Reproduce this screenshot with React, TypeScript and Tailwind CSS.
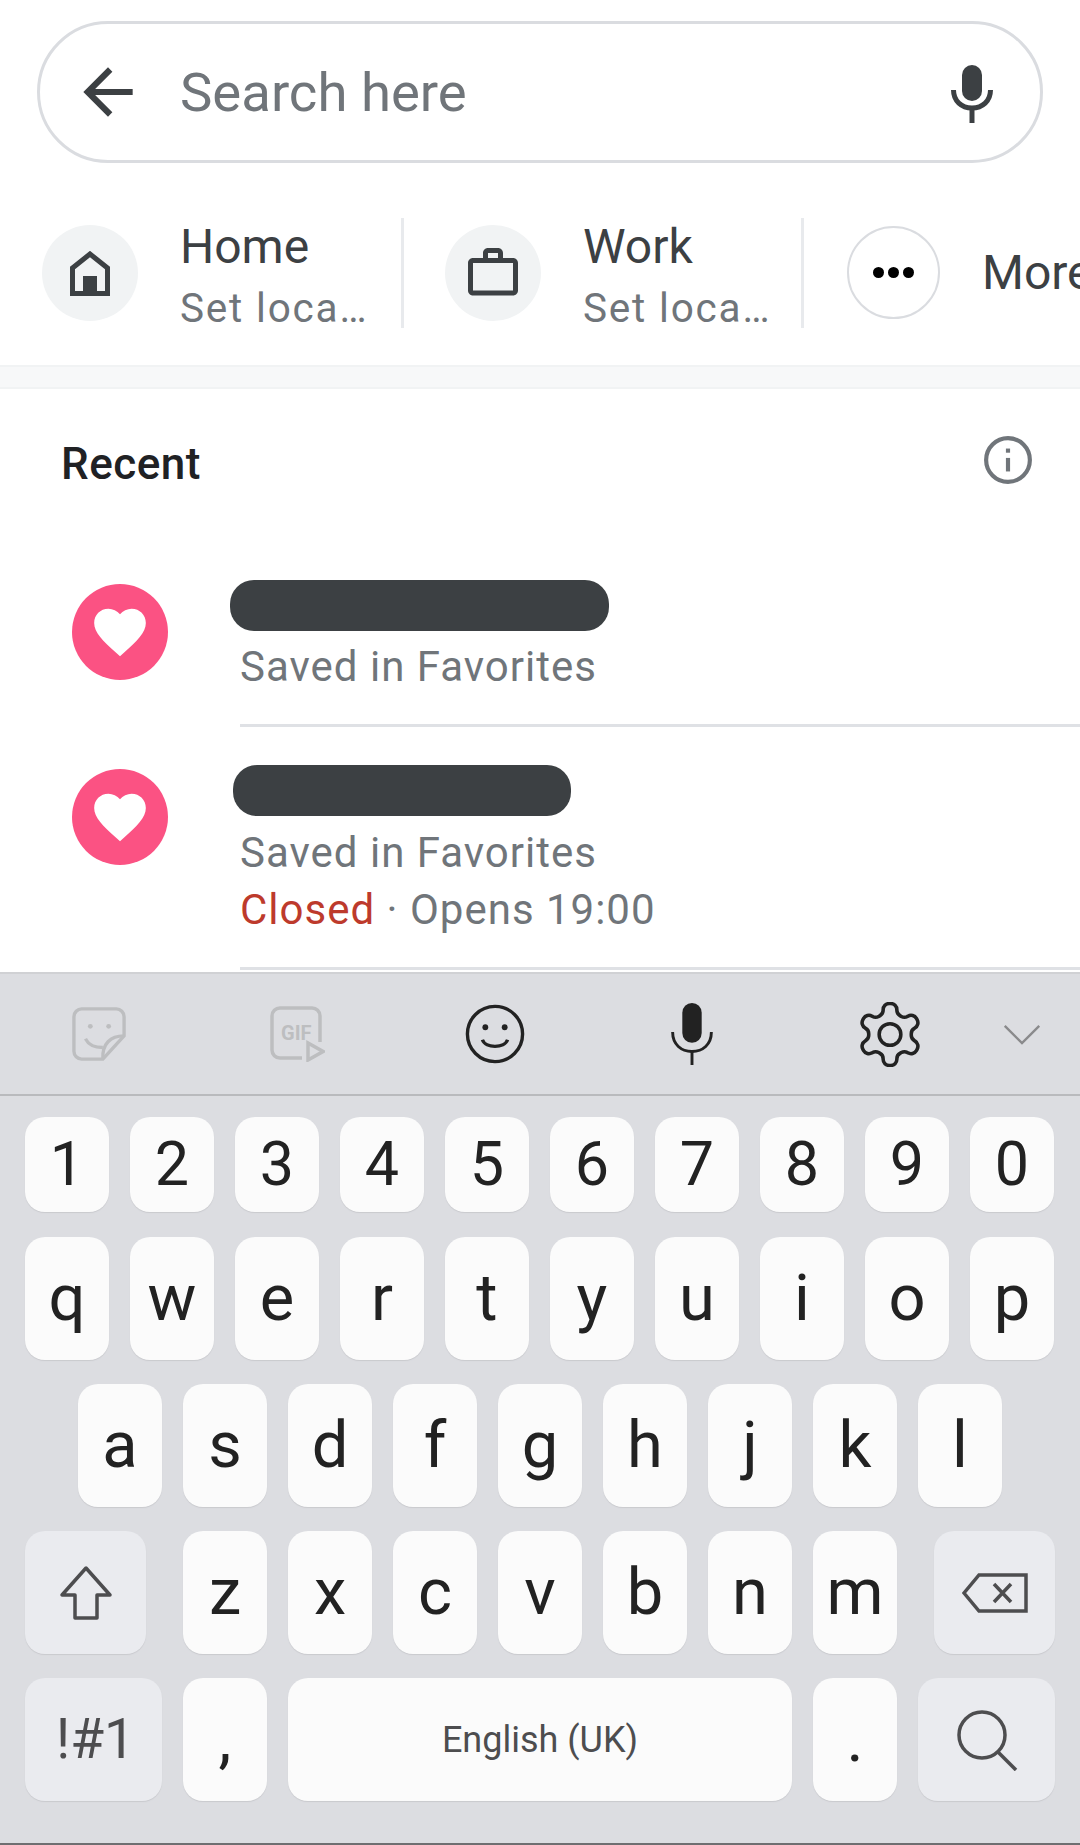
// Maps search screen with the on-screen keyboard open underneath it.

const NUMBERS = ["1", "2", "3", "4", "5", "6", "7", "8", "9", "0"];
const TOP_LETTERS = ["q", "w", "e", "r", "t", "y", "u", "i", "o", "p"];
const MID_LETTERS = ["a", "s", "d", "f", "g", "h", "j", "k", "l"];
const LOW_LETTERS = ["z", "x", "c", "v", "b", "n", "m"];

function Key({ label, small }: { label: string; small?: boolean }) {
  return (
    <div
      className={`w-[84px] h-full flex items-center justify-center bg-[#fbfbfb] rounded-[20px] shadow-[0_1px_1px_#c9cace] leading-none text-[#222222] ${
        small ? "text-[61px]" : "text-[65px]"
      }`}
    >
      {label}
    </div>
  );
}

function SideKey({ width, children }: { width: string; children: React.ReactNode }) {
  return (
    <div className={`${width} h-full flex items-center justify-center bg-[#eaebef] rounded-[20px] shadow-[0_1px_1px_#c9cace] text-[#4d4d4f]`}>
      {children}
    </div>
  );
}

function Heart() {
  return (
    <div className="w-[96px] h-[96px] rounded-full bg-[#fb5283] flex items-center justify-center shrink-0">
      <svg width="62" height="62" viewBox="0 0 24 24" fill="#ffffff">
        <path d="M12 21.400l-1.500-1.400C5.400 15.400 2 12.300 2 8.500 2 5.400 4.400 3 7.500 3c1.700 0 3.400.800 4.500 2.100C13.100 3.800 14.800 3 16.500 3 19.600 3 22 5.400 22 8.500c0 3.800-3.400 6.900-8.500 11.500L12 21.400z" />
      </svg>
    </div>
  );
}

function ShortcutText({ title, width }: { title: string; width: string }) {
  return (
    <div className={`flex flex-col shrink-0 mt-[5px] ${width}`}>
      <span className="text-[48px] leading-[54px] text-[#3c4043]">{title}</span>
      <span className="text-[40.5px] leading-[48px] mt-[10px] text-[#70757a] tracking-[1.8px] whitespace-nowrap">Set loca…</span>
    </div>
  );
}

export default function App() {
  return (
    <div className="w-[1080px] h-[1845px] overflow-hidden bg-white flex flex-col font-['Roboto',sans-serif]">
      {/* Search box */}
      <div className="pt-[21px] px-[37px]">
        <div className="h-[142px] rounded-full border-[3px] border-[#dadce0] flex items-center pl-[31px] pr-[47px]">
          <svg width="74" height="74" viewBox="0 0 24 24" fill="#3c4043" className="shrink-0">
            <path d="M20 11H7.830l5.590-5.590L12 4l-8 8 8 8 1.410-1.410L7.830 13H20v-2z" />
          </svg>
          <span className="ml-[35px] text-[54.5px] leading-none text-[#70757a] flex-1">Search here</span>
          <svg width="42" height="58" viewBox="0 0 42 58" fill="none" className="shrink-0 mt-[4px]">
            <rect x="11" y="0" width="20" height="36" rx="10" fill="#3c4043" />
            <path d="M2.500 25c0 11 8 18 18.500 18s18.500-7 18.500-18" stroke="#3c4043" strokeWidth="5" />
            <path d="M21 43v15" stroke="#3c4043" strokeWidth="5" />
          </svg>
        </div>
      </div>

      {/* Home / Work / More shortcuts */}
      <div className="mt-[51px] h-[118px] flex items-center pl-[42px] overflow-hidden shrink-0">
        <div className="w-[96px] h-[96px] rounded-full bg-[#f1f3f4] flex items-center justify-center shrink-0">
          <svg width="40" height="45" viewBox="0 0 40 45" fill="none">
            <path d="M2.500 42.500V17L20 3l17.500 14v25.500z" stroke="#3c4043" strokeWidth="5" />
            <path d="M13 25h14v20H13z" fill="#3c4043" />
          </svg>
        </div>
        <div className="ml-[42px] shrink-0">
          <ShortcutText title="Home" width="w-[221px]" />
        </div>
        <div className="w-[3px] h-[110px] bg-[#e8eaed] shrink-0" />
        <div className="w-[96px] h-[96px] rounded-full bg-[#f1f3f4] flex items-center justify-center shrink-0 ml-[41px]">
          <svg width="60" height="60" viewBox="0 0 24 24" fill="#3c4043">
            <path d="M14 6V4h-4v2h4zM4 8v11h16V8H4zm16-2c1.110 0 2 .890 2 2v11c0 1.110-.890 2-2 2H4c-1.110 0-2-.890-2-2l.010-11c0-1.110.880-2 1.990-2h4V4c0-1.110.890-2 2-2h4c1.110 0 2 .890 2 2v2h4z" />
          </svg>
        </div>
        <div className="ml-[42px] shrink-0">
          <ShortcutText title="Work" width="w-[218px]" />
        </div>
        <div className="w-[3px] h-[110px] bg-[#e8eaed] shrink-0" />
        <div className="w-[93px] h-[93px] -mt-[1px] rounded-full border-[2px] border-[#dadce0] flex items-center justify-center gap-[4px] shrink-0 ml-[43px]">
          <span className="w-[11px] h-[11px] rounded-full bg-black" />
          <span className="w-[11px] h-[11px] rounded-full bg-black" />
          <span className="w-[11px] h-[11px] rounded-full bg-black" />
        </div>
        <span className="ml-[42px] text-[48px] leading-none text-[#3c4043] shrink-0">More</span>
      </div>

      {/* Grey band between shortcuts and the list */}
      <div className="mt-[33px] h-[24px] bg-[#f7f8f9] border-y-[2px] border-[#f1f3f4] shrink-0" />

      {/* Recent list */}
      <div className="h-[583px] shrink-0">
        <div className="flex items-center justify-between pl-[61px] pr-[47px] pt-[51px]">
          <span className="text-[44px] leading-[48px] font-medium tracking-[0.5px] text-[#202124]">Recent</span>
          <svg width="50" height="50" viewBox="0 0 24 24" fill="none" stroke="#70757a" strokeWidth="2" className="-mt-[8px]">
            <circle cx="12" cy="12" r="10.500" />
            <path d="M12 11v6.500" />
            <path d="M12 6.500v2" />
          </svg>
        </div>
        <div className="mt-[96px] pl-[72px] flex">
          <Heart />
          <div className="ml-[72px] flex-1 -mt-[4px]">
            <div className="w-[379px] h-[51px] rounded-[24px] bg-[#3c4043] -ml-[10px]" />
            <div className="mt-[12px] text-[42px] leading-[48px] tracking-[1px] text-[#70757a]">Saved in Favorites</div>
            <div className="mt-[33px] h-[3px] bg-[#dfe1e5]" />
          </div>
        </div>
        <div className="mt-[42px] pl-[72px] flex">
          <Heart />
          <div className="ml-[72px] flex-1 -mt-[4px]">
            <div className="w-[338px] h-[51px] rounded-[24px] bg-[#3c4043] -ml-[7px]" />
            <div className="mt-[13px] text-[42px] leading-[48px] tracking-[1px] text-[#70757a]">Saved in Favorites</div>
            <div className="mt-[9px] text-[42px] leading-[48px] tracking-[1px] text-[#70757a]">
              <span className="text-[#bd3a2c]">Closed</span> · Opens 19:00
            </div>
            <div className="mt-[33px] h-[3px] bg-[#dfe1e5]" />
          </div>
        </div>
      </div>

      {/* Keyboard */}
      <div className="flex-1 bg-[#dcdde1] border-t-[2px] border-[#d0d1d4] border-b-[2px] border-b-[#6e6e70] flex flex-col">
        <div className="h-[122px] shrink-0 border-b-[2px] border-[#b9babd] flex items-center">
          <svg width="54" height="54" viewBox="0 0 56 56" fill="none" stroke="#bdbec0" strokeWidth="3.500" className="ml-[72px] shrink-0">
            <path d="M32 54H10a8 8 0 0 1-8-8V10a8 8 0 0 1 8-8h36a8 8 0 0 1 8 8v20z" />
            <path d="M54 30c-14 0-23 8-22 24" />
            <path d="M14 33c4 8 11 9 18 9" />
            <circle cx="19" cy="20" r="2.500" fill="#bdbec0" stroke="none" />
            <circle cx="38" cy="20" r="2.500" fill="#bdbec0" stroke="none" />
          </svg>
          <svg width="56" height="56" viewBox="0 0 56 56" fill="none" stroke="#bdbec0" strokeWidth="3.500" className="ml-[143px] shrink-0">
            <path d="M33 52H11a8 8 0 0 1-8-8V10a8 8 0 0 1 8-8h32a8 8 0 0 1 8 8v26" />
            <path d="M39 37v17l15-8.500z" />
            <text x="12" y="34" fontSize="20" fontWeight="700" fill="#bdbec0" stroke="none" fontFamily="Roboto">GIF</text>
          </svg>
          <svg width="60" height="62" viewBox="0 0 62 62" fill="none" stroke="#222222" strokeWidth="3.500" className="ml-[140px] shrink-0">
            <circle cx="31" cy="31" r="28.500" />
            <path d="M18 37c3 9 23 9 26 0" />
            <circle cx="21" cy="24" r="3" fill="#222222" stroke="none" />
            <circle cx="41" cy="24" r="3" fill="#222222" stroke="none" />
          </svg>
          <svg width="44" height="62" viewBox="0 0 44 64" fill="none" className="ml-[145px] shrink-0">
            <rect x="12" y="0" width="20" height="41" rx="10" fill="#222222" />
            <path d="M2 30c0 13 9 20 20 20s20-7 20-20" stroke="#222222" strokeWidth="3" />
            <path d="M22 50v14" stroke="#222222" strokeWidth="3" />
          </svg>
          <svg width="62" height="65" viewBox="2.400 1.500 19.200 21" fill="none" stroke="#222222" strokeWidth="1.150" className="ml-[145px] shrink-0">
            <path d="M12.220 2h-.440a2 2 0 0 0-2 2v.180a2 2 0 0 1-1 1.730l-.430.250a2 2 0 0 1-2 0l-.150-.080a2 2 0 0 0-2.730.730l-.220.380a2 2 0 0 0 .730 2.730l.150.100a2 2 0 0 1 1 1.720v.510a2 2 0 0 1-1 1.740l-.150.090a2 2 0 0 0-.730 2.730l.220.380a2 2 0 0 0 2.730.730l.150-.080a2 2 0 0 1 2 0l.430.250a2 2 0 0 1 1 1.730V20a2 2 0 0 0 2 2h.440a2 2 0 0 0 2-2v-.180a2 2 0 0 1 1-1.730l.430-.250a2 2 0 0 1 2 0l.150.080a2 2 0 0 0 2.730-.730l.220-.390a2 2 0 0 0-.730-2.730l-.150-.080a2 2 0 0 1-1-1.740v-.500a2 2 0 0 1 1-1.740l.150-.090a2 2 0 0 0 .730-2.730l-.220-.380a2 2 0 0 0-2.730-.730l-.150.080a2 2 0 0 1-2 0l-.430-.250a2 2 0 0 1-1-1.730V4a2 2 0 0 0-2-2z" />
            <circle cx="12" cy="12" r="3.500" />
          </svg>
          <svg width="40" height="23" viewBox="0 0 40 24" fill="none" stroke="#8a8a8c" strokeWidth="2.500" className="ml-[81px] shrink-0">
            <path d="M2 3l18 18L38 3" />
          </svg>
        </div>

        <div className="mt-[21px] h-[95px] flex gap-[21px] pl-[25px] shrink-0">
          {NUMBERS.map((n) => <Key key={n} label={n} small />)}
        </div>
        <div className="mt-[25px] h-[123px] flex gap-[21px] pl-[25px] shrink-0">
          {TOP_LETTERS.map((k) => <Key key={k} label={k} />)}
        </div>
        <div className="mt-[24px] h-[123px] flex gap-[21px] pl-[78px] shrink-0">
          {MID_LETTERS.map((k) => <Key key={k} label={k} />)}
        </div>
        <div className="mt-[24px] h-[123px] flex gap-[21px] pl-[25px] shrink-0">
          <SideKey width="w-[121px] mr-[16px]">
            <svg width="54" height="56" viewBox="0 0 54 56" fill="none" stroke="#4d4d4f" strokeWidth="3.500">
              <path d="M27 3L3 30h13v23h22V30h13z" strokeLinejoin="round" />
            </svg>
          </SideKey>
          {LOW_LETTERS.map((k) => <Key key={k} label={k} />)}
          <SideKey width="w-[121px] ml-[16px]">
            <svg width="66" height="40" viewBox="0 0 66 40" fill="none" stroke="#4d4d4f" strokeWidth="3.500">
              <path d="M17 2h47v36H17L2 20z" />
              <path d="M32 11l17 18M49 11L32 29" />
            </svg>
          </SideKey>
        </div>
        <div className="mt-[24px] h-[123px] flex gap-[21px] pl-[25px] shrink-0">
          <SideKey width="w-[137px]">
            <span className="text-[55px] leading-none ml-[4px]">!#1</span>
          </SideKey>
          <Key label="," />
          <div className="w-[504px] h-full flex items-center justify-center bg-[#fbfbfb] rounded-[20px] shadow-[0_1px_1px_#c9cace] text-[36px] text-[#4d4d4f]">
            English (UK)
          </div>
          <Key label="." />
          <SideKey width="w-[137px]">
            <svg width="62" height="62" viewBox="0 0 62 62" fill="none" stroke="#4d4d4f" strokeWidth="3.500">
              <circle cx="26" cy="26" r="23" />
              <path d="M42 43l18 18" />
            </svg>
          </SideKey>
        </div>
      </div>
    </div>
  );
}
